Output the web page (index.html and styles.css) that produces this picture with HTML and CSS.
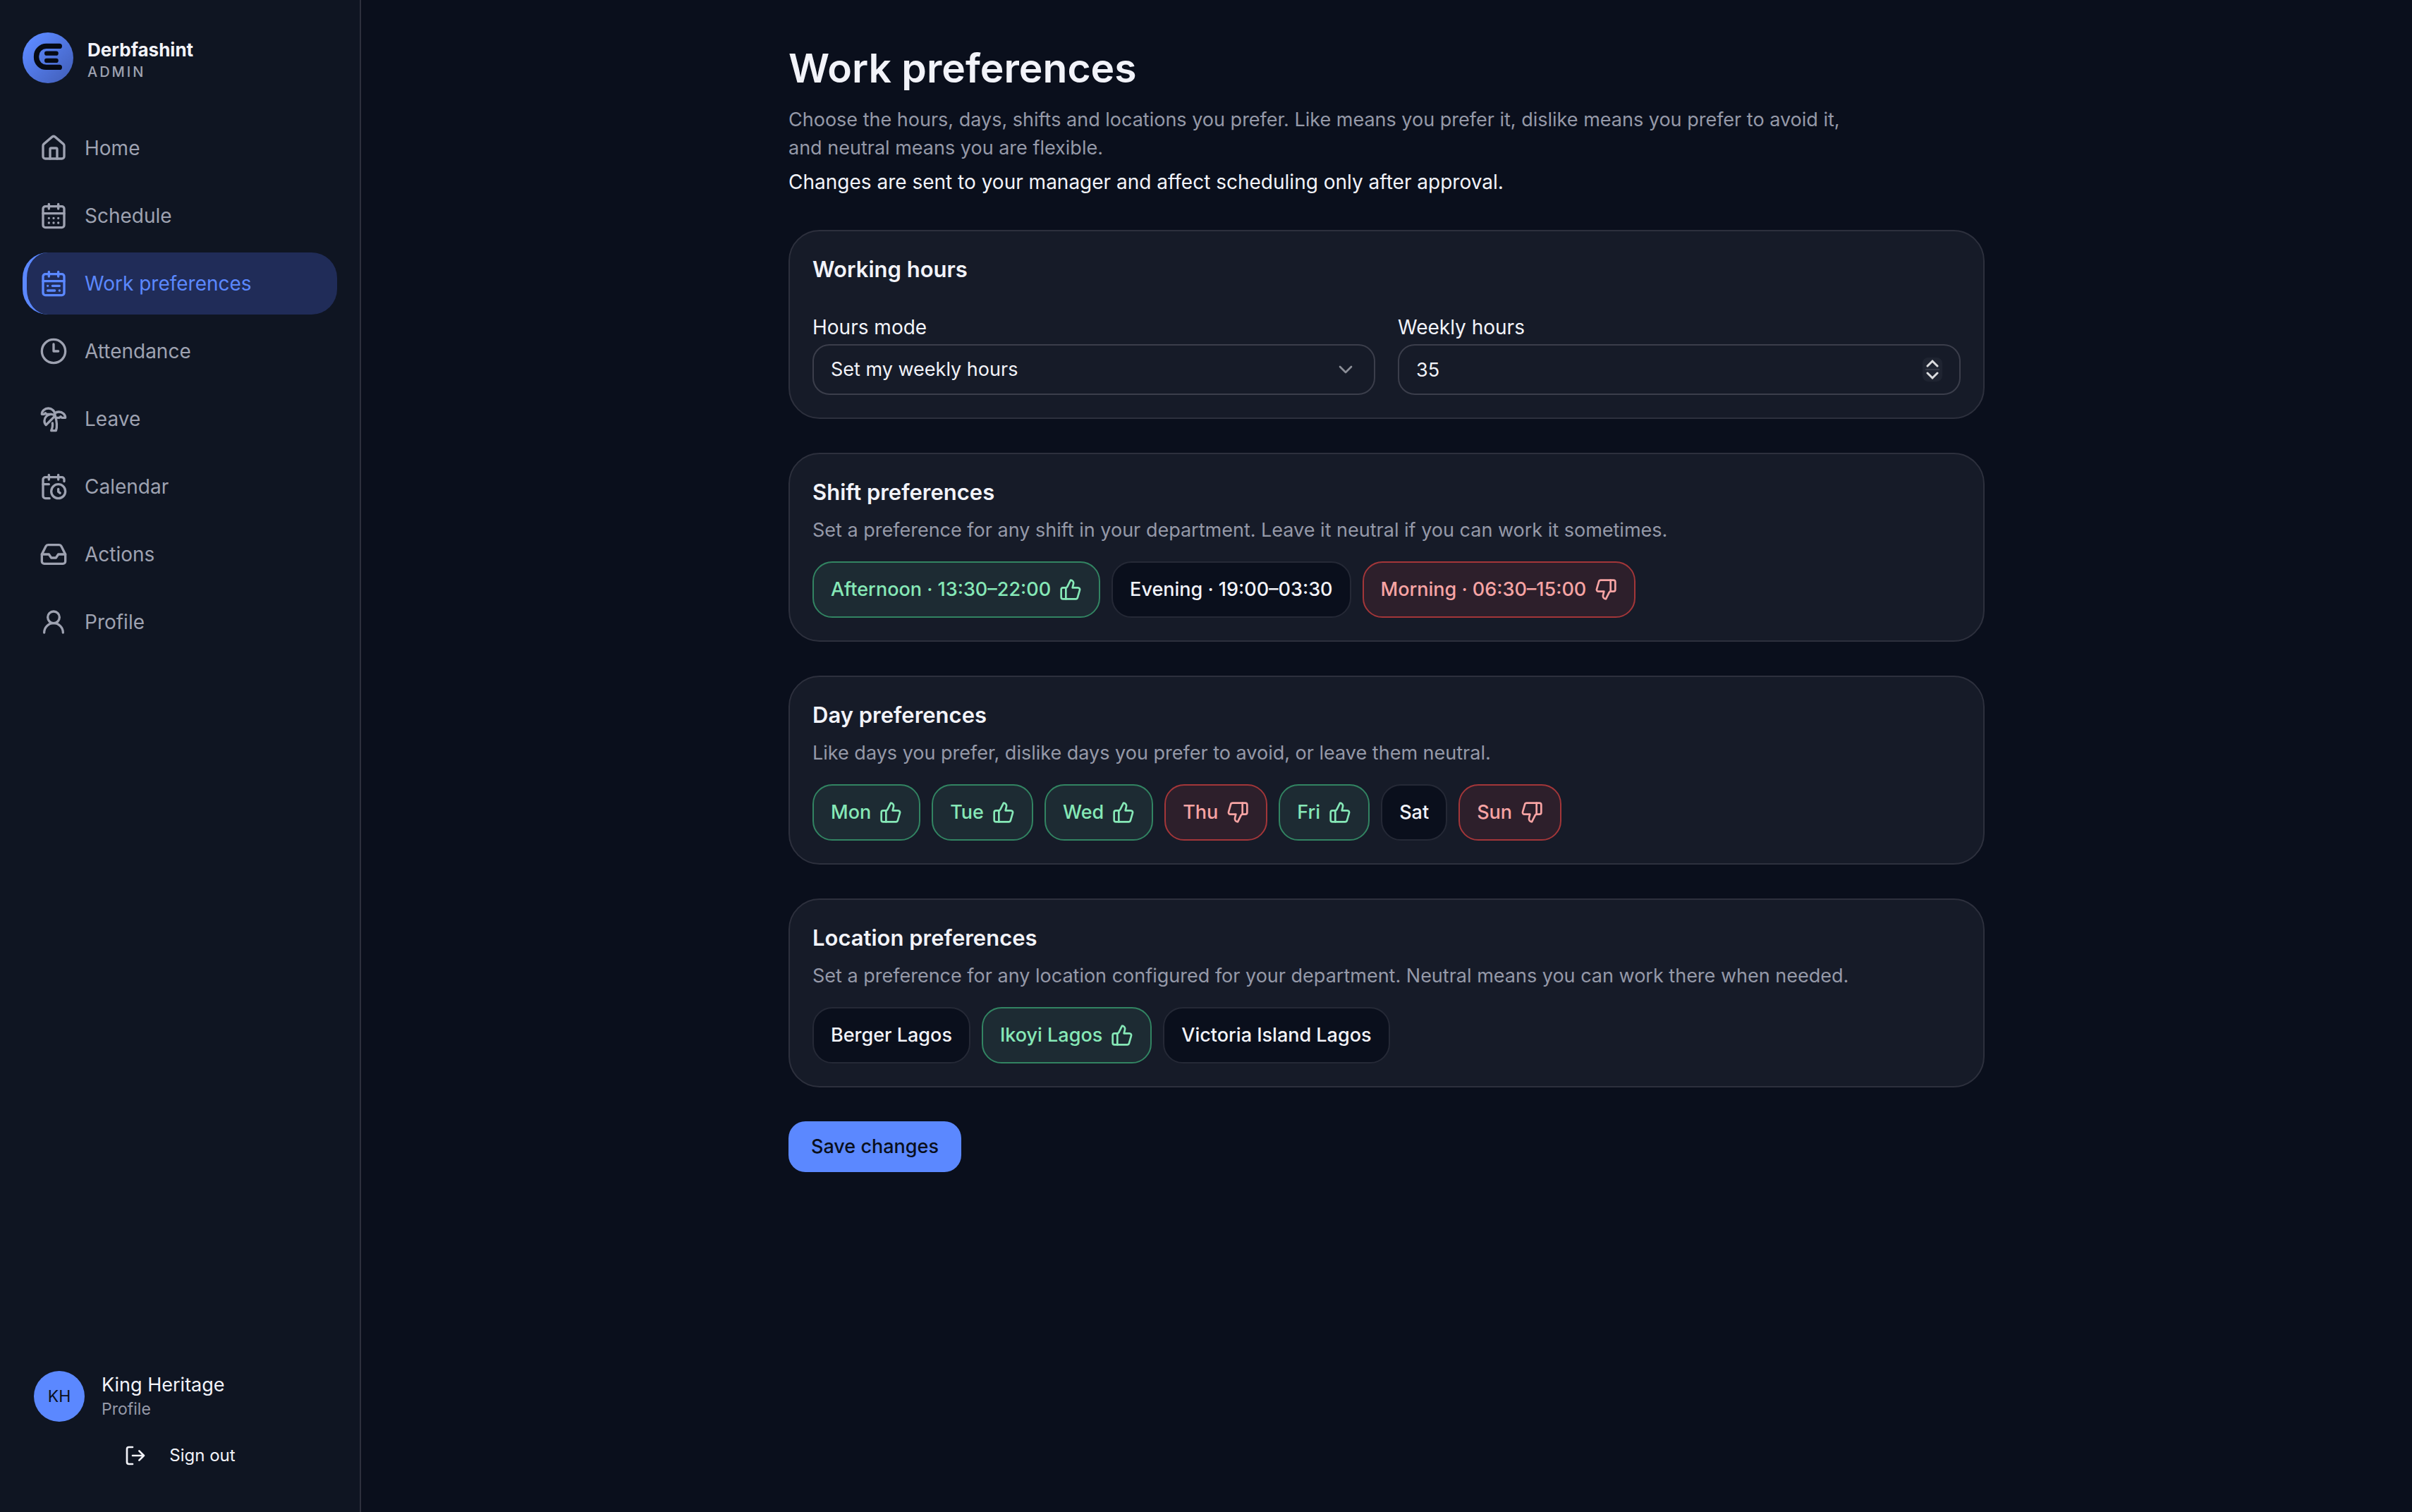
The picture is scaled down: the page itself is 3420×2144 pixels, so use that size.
FILE: index.html
```html
<!DOCTYPE html>
<html lang="en">
<head>
    <meta charset="UTF-8">
    <meta name="viewport" content="width=device-width, initial-scale=1.0">
    <title>Work preferences - Derbfashint</title>
    <link rel="stylesheet" href="styles.css">
</head>
<body>
    <!-- Shared thumb icons, used by the preference chips -->
    <svg class="sprite" aria-hidden="true">
        <symbol id="thumbs-up" viewBox="0 0 24 24">
            <path d="M7 10v12"/>
            <path d="M15 5.88 14 10h5.83a2 2 0 0 1 1.92 2.56l-2.33 8A2 2 0 0 1 17.5 22H4a2 2 0 0 1-2-2v-8a2 2 0 0 1 2-2h2.76a2 2 0 0 0 1.79-1.11L12 2a3.13 3.13 0 0 1 3 3.88Z"/>
        </symbol>
        <symbol id="thumbs-down" viewBox="0 0 24 24">
            <path d="M17 14V2"/>
            <path d="M9 18.12 10 14H4.17a2 2 0 0 1-1.92-2.56l2.33-8A2 2 0 0 1 6.5 2H20a2 2 0 0 1 2 2v8a2 2 0 0 1-2 2h-2.76a2 2 0 0 0-1.79 1.11L12 22a3.13 3.13 0 0 1-3-3.88Z"/>
        </symbol>
    </svg>

    <div class="layout">
        <aside class="sidebar">
            <div class="brand">
                <svg class="brand-logo" viewBox="0 0 72 72" aria-hidden="true">
                    <defs>
                        <linearGradient id="logo-fill" x1="0.15" y1="0.15" x2="0.85" y2="0.85">
                            <stop offset="0" stop-color="#5b88ff"/>
                            <stop offset="1" stop-color="#4564c2"/>
                        </linearGradient>
                    </defs>
                    <circle cx="36" cy="36" r="36" fill="url(#logo-fill)"/>
                    <path d="M52.3 19.4H33.6a14 14 0 0 0-14 14v2a14 14 0 0 0 14 14h18.7" fill="none" stroke="#060a14" stroke-width="7.4" stroke-linecap="round"/>
                    <rect x="31" y="26.6" width="19.8" height="6.2" rx="3.1" fill="#060a14"/>
                    <rect x="31" y="36.8" width="19.8" height="6.2" rx="3.1" fill="#060a14"/>
                </svg>
                <div class="brand-text">
                    <div class="brand-name">Derbfashint</div>
                    <div class="brand-role">ADMIN</div>
                </div>
            </div>

            <nav class="nav">
                <a class="nav-item" href="#home">
                    <svg class="icon" viewBox="0 0 24 24"><path d="M15 21v-8a1 1 0 0 0-1-1h-4a1 1 0 0 0-1 1v8"/><path d="M3 10a2 2 0 0 1 .709-1.528l7-6a2 2 0 0 1 2.582 0l7 6A2 2 0 0 1 21 10v9a2 2 0 0 1-2 2H5a2 2 0 0 1-2-2z"/></svg>
                    Home
                </a>
                <a class="nav-item" href="#schedule">
                    <svg class="icon" viewBox="0 0 24 24"><path d="M8 2v4M16 2v4"/><rect width="18" height="18" x="3" y="4" rx="2"/><path d="M3 10h18M8 14h.01M12 14h.01M16 14h.01M8 18h.01M12 18h.01M16 18h.01"/></svg>
                    Schedule
                </a>
                <a class="nav-item active" href="#preferences" aria-current="page">
                    <svg class="icon" viewBox="0 0 24 24"><path d="M8 2v4M16 2v4"/><rect width="18" height="18" x="3" y="4" rx="2"/><path d="M3 10h18M17 14h-6M13 18H7M7 14h.01M17 18h.01"/></svg>
                    Work preferences
                </a>
                <a class="nav-item" href="#attendance">
                    <svg class="icon" viewBox="0 0 24 24"><circle cx="12" cy="12" r="10"/><path d="M12 6v6h4"/></svg>
                    Attendance
                </a>
                <a class="nav-item" href="#leave">
                    <svg class="icon" viewBox="0 0 24 24"><path d="M13 8c0-2.76-2.46-5-5.5-5S2 5.24 2 8h2l1-1 1 1h4"/><path d="M13 7.14A5.82 5.82 0 0 1 16.5 6c3.04 0 5.5 2.24 5.5 5h-3l-1-1-1 1h-3"/><path d="M5.89 9.71c-2.15 2.15-2.3 5.47-.35 7.43l4.24-4.25.7-.7.71-.71 2.12-2.12c-1.95-1.96-5.27-1.8-7.42.35"/><path d="M11 15.5c.5 2.5-.17 4.5-1 6.5h4c2-5.5-.5-12-1-14"/></svg>
                    Leave
                </a>
                <a class="nav-item" href="#calendar">
                    <svg class="icon" viewBox="0 0 24 24"><path d="M21 7.5V6a2 2 0 0 0-2-2H5a2 2 0 0 0-2 2v14a2 2 0 0 0 2 2h3.5"/><path d="M16 2v4M8 2v4M3 10h5M17.5 17.5 16 16.3V14"/><circle cx="16" cy="16" r="6"/></svg>
                    Calendar
                </a>
                <a class="nav-item" href="#actions">
                    <svg class="icon" viewBox="0 0 24 24"><path d="M22 12h-6l-2 3h-4l-2-3H2"/><path d="M5.45 5.11 2 12v6a2 2 0 0 0 2 2h16a2 2 0 0 0 2-2v-6l-3.45-6.89A2 2 0 0 0 16.76 4H7.24a2 2 0 0 0-1.79 1.11z"/></svg>
                    Actions
                </a>
                <a class="nav-item" href="#profile">
                    <svg class="icon" viewBox="0 0 24 24"><circle cx="12" cy="8" r="5"/><path d="M20 21a8 8 0 0 0-16 0"/></svg>
                    Profile
                </a>
            </nav>

            <div class="account">
                <a class="user" href="#profile">
                    <span class="avatar">KH</span>
                    <span>
                        <span class="user-name">King Heritage</span>
                        <span class="user-link">Profile</span>
                    </span>
                </a>
                <button class="sign-out" type="button">
                    <svg class="icon icon-small" viewBox="0 0 24 24"><path d="M9 21H5a2 2 0 0 1-2-2V5a2 2 0 0 1 2-2h4"/><path d="m16 17 5-5-5-5M21 12H9"/></svg>
                    Sign out
                </button>
            </div>
        </aside>

        <main class="content">
            <form class="page">
                <header class="page-header">
                    <h1>Work preferences</h1>
                    <p class="lead">Choose the hours, days, shifts and locations you prefer. Like means you prefer it, dislike means you prefer to avoid it, and neutral means you are flexible.</p>
                    <p class="notice">Changes are sent to your manager and affect scheduling only after approval.</p>
                </header>

                <section class="card">
                    <h2>Working hours</h2>
                    <div class="fields">
                        <div class="field">
                            <label for="hours-mode">Hours mode</label>
                            <div class="control">
                                <select id="hours-mode">
                                    <option>Set my weekly hours</option>
                                </select>
                                <svg class="icon icon-small chevron" viewBox="0 0 24 24"><path d="m6 9 6 6 6-6"/></svg>
                            </div>
                        </div>
                        <div class="field">
                            <label for="weekly-hours">Weekly hours</label>
                            <div class="control">
                                <input type="number" id="weekly-hours" value="35">
                                <div class="stepper">
                                    <button type="button" aria-label="Increase" onclick="document.getElementById('weekly-hours').stepUp()">
                                        <svg viewBox="0 0 20 12"><path d="m3 10 7-7 7 7"/></svg>
                                    </button>
                                    <button type="button" aria-label="Decrease" onclick="document.getElementById('weekly-hours').stepDown()">
                                        <svg viewBox="0 0 20 12"><path d="m3 2 7 7 7-7"/></svg>
                                    </button>
                                </div>
                            </div>
                        </div>
                    </div>
                </section>

                <section class="card">
                    <h2>Shift preferences</h2>
                    <p class="hint">Set a preference for any shift in your department. Leave it neutral if you can work it sometimes.</p>
                    <div class="chips">
                        <button type="button" class="chip like">Afternoon · 13:30–22:00 <svg class="icon icon-small"><use href="#thumbs-up"/></svg></button>
                        <button type="button" class="chip">Evening · 19:00–03:30</button>
                        <button type="button" class="chip dislike">Morning · 06:30–15:00 <svg class="icon icon-small"><use href="#thumbs-down"/></svg></button>
                    </div>
                </section>

                <section class="card">
                    <h2>Day preferences</h2>
                    <p class="hint">Like days you prefer, dislike days you prefer to avoid, or leave them neutral.</p>
                    <div class="chips">
                        <button type="button" class="chip like">Mon <svg class="icon icon-small"><use href="#thumbs-up"/></svg></button>
                        <button type="button" class="chip like">Tue <svg class="icon icon-small"><use href="#thumbs-up"/></svg></button>
                        <button type="button" class="chip like">Wed <svg class="icon icon-small"><use href="#thumbs-up"/></svg></button>
                        <button type="button" class="chip dislike">Thu <svg class="icon icon-small"><use href="#thumbs-down"/></svg></button>
                        <button type="button" class="chip like">Fri <svg class="icon icon-small"><use href="#thumbs-up"/></svg></button>
                        <button type="button" class="chip">Sat</button>
                        <button type="button" class="chip dislike">Sun <svg class="icon icon-small"><use href="#thumbs-down"/></svg></button>
                    </div>
                </section>

                <section class="card">
                    <h2>Location preferences</h2>
                    <p class="hint">Set a preference for any location configured for your department. Neutral means you can work there when needed.</p>
                    <div class="chips">
                        <button type="button" class="chip">Berger Lagos</button>
                        <button type="button" class="chip like">Ikoyi Lagos <svg class="icon icon-small"><use href="#thumbs-up"/></svg></button>
                        <button type="button" class="chip">Victoria Island Lagos</button>
                    </div>
                </section>

                <button class="save" type="button">Save changes</button>
            </form>
        </main>
    </div>
</body>
</html>
```

FILE: styles.css
```css
:root {
    --bg: #0a0f1c;
    --sidebar: #0f1522;
    --card: #161b28;
    --border: #2d303d;
    --input-border: #3b3e4b;
    --chip-border: #252936;
    --text: #f2f3f9;
    --muted: #9599a8;
    --nav-text: #9ea2b1;
    --accent: #5b88ff;
    --accent-soft: #202c58;
    --like: #86e8b7;
    --like-bg: #1d2b33;
    --like-border: #328462;
    --dislike: #f7a4a4;
    --dislike-bg: #2d1f2b;
    --dislike-border: #a33639;
}

* {
    margin: 0;
    padding: 0;
    box-sizing: border-box;
}

body {
    font-family: Inter, "Open Sans", sans-serif;
    font-size: 27px;
    line-height: 40px;
    background-color: var(--bg);
    color: var(--text);
}

button, input, select {
    font: inherit;
    color: inherit;
    border: none;
    background: none;
}

button {
    cursor: pointer;
}

a {
    color: inherit;
    text-decoration: none;
}

.sprite {
    display: none;
}

.icon {
    width: 40px;
    height: 40px;
    flex-shrink: 0;
    fill: none;
    stroke: currentColor;
    stroke-width: 2;
    stroke-linecap: round;
    stroke-linejoin: round;
}

.icon-small {
    width: 32px;
    height: 32px;
}

.layout {
    display: flex;
    min-height: 100vh;
}

/* Sidebar */
.sidebar {
    display: flex;
    flex-direction: column;
    flex: 0 0 512px;
    padding: 46px 32px 48px;
    background-color: var(--sidebar);
    border-right: 2px solid var(--border);
}

.brand {
    display: flex;
    align-items: center;
    gap: 20px;
    margin-bottom: 48px;
}

.brand-logo {
    width: 72px;
    height: 72px;
}

.brand-text {
    padding-top: 4px;
}

.brand-name {
    font-size: 26px;
    line-height: 36px;
    font-weight: 700;
}

.brand-role {
    font-size: 20px;
    line-height: 26px;
    font-weight: 500;
    letter-spacing: 3px;
    color: var(--nav-text);
}

.nav {
    display: flex;
    flex-direction: column;
    gap: 8px;
}

.nav-item {
    display: flex;
    align-items: center;
    gap: 24px;
    padding: 24px 18px;
    border-left: 6px solid transparent;
    border-radius: 36px;
    font-size: 28px;
    color: var(--nav-text);
}

.nav-item.active {
    color: var(--accent);
    background-color: var(--accent-soft);
    border-left-color: var(--accent);
}

.account {
    display: flex;
    flex-direction: column;
    gap: 16px;
    margin-top: auto;
}

.user {
    display: flex;
    align-items: center;
    gap: 24px;
    padding: 0 16px;
}

.avatar {
    display: flex;
    align-items: center;
    justify-content: center;
    width: 72px;
    height: 72px;
    border-radius: 50%;
    background-color: var(--accent);
    color: var(--bg);
    font-size: 23px;
}

.user-name, .user-link {
    display: block;
}

.user-name {
    line-height: 36px;
}

.user-link {
    font-size: 23px;
    line-height: 32px;
    color: var(--muted);
}

.sign-out {
    display: flex;
    align-items: center;
    justify-content: center;
    gap: 32px;
    height: 64px;
    font-size: 24px;
}

/* Page */
.content {
    flex: 1;
    padding: 64px 48px;
}

.page {
    display: flex;
    flex-direction: column;
    align-items: flex-start;
    gap: 48px;
    max-width: 1696px;
    margin: 0 auto;
}

.page-header {
    max-width: 1536px;
}

h1 {
    font-size: 57px;
    line-height: 66px;
    font-weight: 600;
    margin-bottom: 20px;
}

.lead, .hint {
    color: var(--muted);
}

.notice {
    margin-top: 8px;
    font-size: 28px;
}

.card {
    width: 100%;
    padding: 32px;
    background-color: var(--card);
    border: 2px solid var(--border);
    border-radius: 44px;
}

h2 {
    font-size: 31px;
    line-height: 44px;
    font-weight: 600;
}

.hint {
    margin-top: 12px;
}

.fields {
    display: grid;
    grid-template-columns: 1fr 1fr;
    gap: 32px;
    margin-top: 40px;
}

.field {
    display: flex;
    flex-direction: column;
    gap: 4px;
}

.field label {
    font-size: 28px;
}

.control {
    position: relative;
}

.control select, .control input {
    display: block;
    width: 100%;
    height: 72px;
    padding: 0 24px;
    border: 2px solid var(--input-border);
    border-radius: 24px;
    appearance: none;
}

.control input {
    appearance: textfield;
}

.control input::-webkit-inner-spin-button {
    appearance: none;
}

.chevron {
    position: absolute;
    top: 20px;
    right: 26px;
    color: #8b8e97;
    pointer-events: none;
}

.stepper {
    position: absolute;
    top: 19px;
    right: 26px;
    display: flex;
    flex-direction: column;
    width: 28px;
    height: 34px;
    padding: 0 4px;
    border-radius: 8px;
    background-color: #1f2431;
}

.stepper button {
    display: flex;
    flex: 1;
    align-items: center;
    justify-content: center;
}

.stepper button + button {
    border-top: 2px solid #343845;
}

.stepper svg {
    width: 20px;
    height: 12px;
    fill: none;
    stroke: #dcdddf;
    stroke-width: 3;
    stroke-linecap: round;
}

.chips {
    display: flex;
    flex-wrap: wrap;
    gap: 16px;
    margin-top: 24px;
}

.chip {
    display: flex;
    align-items: center;
    gap: 12px;
    height: 80px;
    padding: 0 24px;
    font-weight: 500;
    background-color: var(--bg);
    border: 2px solid var(--chip-border);
    border-radius: 28px;
}

.chip.like {
    color: var(--like);
    background-color: var(--like-bg);
    border-color: var(--like-border);
}

.chip.dislike {
    color: var(--dislike);
    background-color: var(--dislike-bg);
    border-color: var(--dislike-border);
}

.save {
    height: 72px;
    padding: 0 32px;
    border-radius: 24px;
    font-weight: 500;
    color: var(--bg);
    background-color: var(--accent);
}
```
